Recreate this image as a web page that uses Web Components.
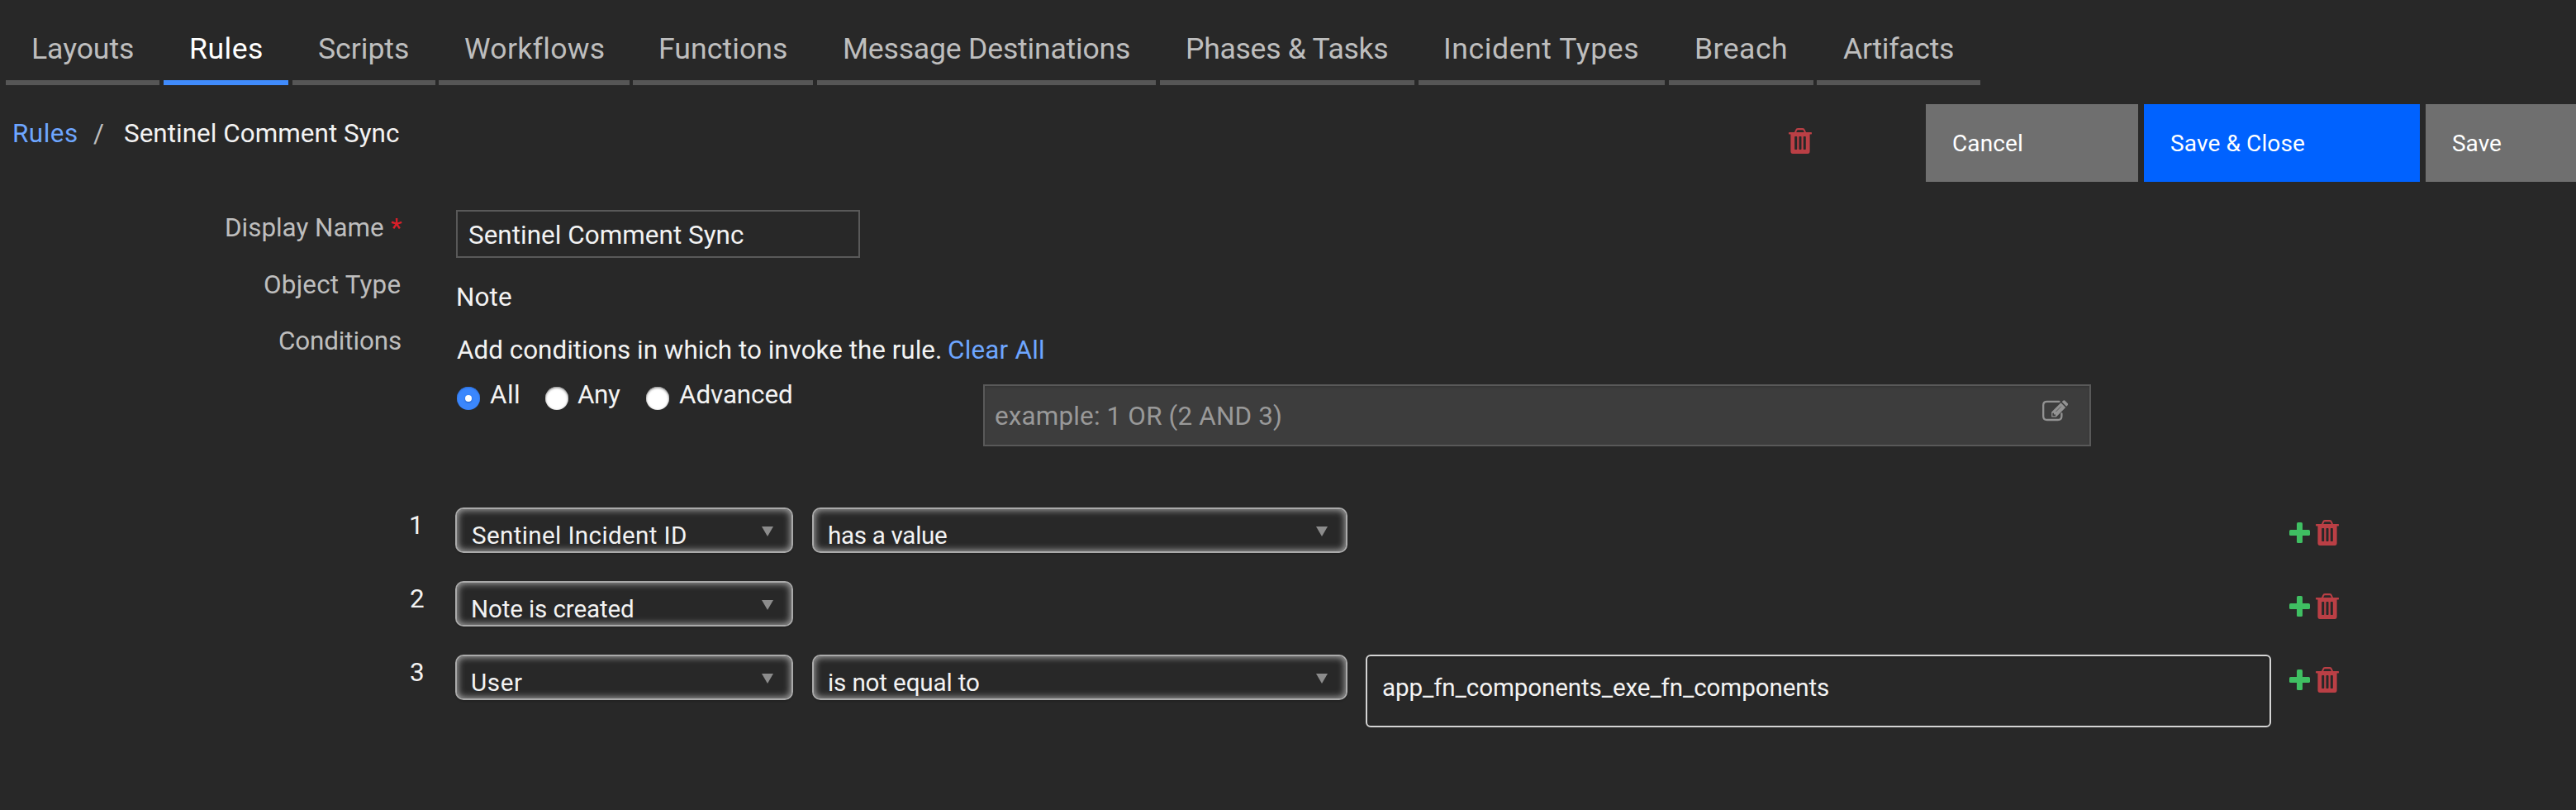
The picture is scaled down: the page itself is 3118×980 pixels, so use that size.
<!DOCTYPE html>
<html lang="en">
<head>
<meta charset="utf-8">
<title>Rules</title>
<style>
html,body{margin:0;background:#282828}
body{width:3118px;height:980px;overflow:hidden;font-family:Roboto,"Liberation Sans",sans-serif;color:#f3f3f3}
</style>
</head>
<body>
<rule-page></rule-page>
<script>
const define = (name, css, html, init) => customElements.define(name, class extends HTMLElement {
  connectedCallback() {
    if (this.shadowRoot) return;
    const root = this.attachShadow({ mode: 'open' });
    root.innerHTML = `<style>:host{display:block;box-sizing:border-box}*{box-sizing:border-box}${css}</style>${typeof html === 'function' ? html(this) : html}`;
    if (init) init(this, root);
  }
});

// One line of text whose glyphs are tracked to fill the width "w" at size "s".
const ctx = document.createElement('canvas').getContext('2d');
define('fit-text', ':host{display:block;flex:none;white-space:nowrap;line-height:40px;height:40px}', '<slot></slot>', el => {
  const text = el.textContent, size = +el.getAttribute('s') || 31.4, w = +el.getAttribute('w');
  el.style.fontSize = size + 'px';
  el.style.width = w + 'px';
  ctx.font = `400 ${size}px Roboto, "Liberation Sans", sans-serif`;
  const m = ctx.measureText(text);
  const ink = m.actualBoundingBoxLeft + m.actualBoundingBoxRight;
  if (text.length > 1) el.style.letterSpacing = ((w - ink) / (text.length - 1)).toFixed(3) + 'px';
  el.style.textIndent = m.actualBoundingBoxLeft.toFixed(2) + 'px';
});

define('nav-tab', `
  :host{flex:none;color:#bebebe}
  .t{height:103px;padding:39px 0 0 33px;border-bottom:6px solid #565656}
  :host([active]){color:#fff}
  :host([active]) .t{border-color:#408bfc}`,
  el => `<div class="t" style="width:${el.getAttribute('box')}px;padding-left:${el.getAttribute('pad') || 33}px"><fit-text s="35.6" w="${el.getAttribute('w')}">${el.textContent.replace('&', '&amp;')}</fit-text></div>`,
  el => { el.style.width = el.getAttribute('pitch') + 'px'; });

define('action-button', `
  :host{height:94px;background:#6f6f6f;color:#fff;padding:28px 0 0 33px;flex:none;overflow:hidden;margin-right:7px}
  :host([primary]){background:#0062ff}`,
  '<slot></slot>');

define('trash-icon', ':host{width:28px;height:31px;flex:none}svg{display:block}', `
  <svg width="28" height="31" viewBox="0 0 28 31"><path fill="#ba3f45" fill-rule="evenodd" d="M7 5 8.3 2Q9 0 11 0h6q2 0 2.7 2L21 5h6.3q.7 0 .7.7v1q0 .8-.7.8H25.600V28q0 3-2.600 3H5q-2.600 0-2.600-3V7.500H.7Q0 7.500 0 6.700v-1Q0 5 .7 5ZM9.200 5h9.600l-.8-2q-.3-.8-1-.8h-6q-.7 0-1 .8ZM7.200 10.700v14.600q0 .7.700.7h1.600q.7 0 .7-.7V10.700q0-.7-.7-.7H7.900q-.7 0-.7.700Zm5.300 0v14.600q0 .7.700.7h1.600q.7 0 .7-.7V10.700q0-.7-.7-.7h-1.600q-.7 0-.7.700Zm5.300 0v14.600q0 .7.700.7h1.600q.7 0 .7-.7V10.700q0-.7-.7-.7h-1.600q-.7 0-.7.700Z"/></svg>`);

define('plus-icon', ':host{width:25px;height:25px;flex:none}svg{display:block}', `
  <svg width="25" height="25" viewBox="0 0 25 25" fill="#3fbf62"><rect x="9" width="7" height="25" rx="1.6"/><rect y="9" width="25" height="7" rx="1.600"/></svg>`);

define('edit-icon', ':host{width:32px;height:27px;flex:none}svg{display:block}', `
  <svg width="32" height="27" viewBox="0 0 32 27"><path d="M20.500 1.800H5.700Q1.200 1.800 1.200 6.300v13.200q0 4.500 4.500 4.500h13.200q4.500 0 4.500-4.500V16.500" fill="none" stroke="#929292" stroke-width="2.300" stroke-linecap="round"/><path d="M11.200 20.500v-6L22.500 3.200l5.700 5.700L16.800 20.500ZM23.700 2.200l1.500-1.500q1.200-.9 2.300 0l3.200 3.200q.9 1.200 0 2.400l-1.500 1.500Z" fill="#929292"/><path d="M13.200 15.800v2.600h2.800" fill="none" stroke="#3d3d3d" stroke-width="1.600"/><path d="m16.500 14 6.300-6.300" stroke="#5a5a5a" stroke-width="1"/></svg>`);

define('radio-dot', `
  :host{width:28px;height:28px;border-radius:50%;background:#fff;flex:none;box-shadow:inset 0 1px 3px #777;display:grid;place-items:center}
  :host([checked]){background:#3b87fd;box-shadow:inset 0 1px 2px #2b6fdc}
  :host([checked])::after{content:"";width:8px;height:8px;border-radius:50%;background:#fff;box-shadow:0 1px 2px #1d5ac0}`, '');

define('select-box', `
  :host{display:flex;height:55px;border:2px solid #aaa;border-radius:10px;flex:none;padding:12px 22px 0 19px;justify-content:space-between;
    box-shadow:inset 0 0 8px 1px #aaa,0 2px 2px rgba(0,0,0,.12)}
  i{width:14px;height:12px;background:#8c8c8c;clip-path:polygon(0 0,100% 0,50% 100%);margin-top:9px}`,
  '<slot></slot><i></i>');

define('condition-row', `
  :host{display:flex;height:89px;padding-left:497px}
  .num{width:54px;padding-top:2px}
  .fields{width:2220px;display:flex;align-items:flex-start}
  .act{display:flex;padding-top:15px}
  plus-icon{margin:3px 7px 0 0}`,
  el => `<div class="num"><fit-text w="15">${el.getAttribute('n')}</fit-text></div><div class="fields"><slot></slot></div><div class="act"><plus-icon></plus-icon><trash-icon></trash-icon></div>`);

define('rule-page', `
  :host{width:3118px;height:980px;overflow:hidden;background:#282828}
  nav{display:flex;padding-left:7px;height:103px}
  header{display:flex;height:151px;align-items:flex-start;padding:23px 0 0 17px;overflow:hidden}
  .crumb{display:flex;flex:none;width:2148px;padding-top:16px}
  .link{color:#6ea6ff}
  header trash-icon{margin:29px 138px 0 0}
  .form{display:grid;grid-template-columns:485px 1fr;column-gap:67px;height:360px}
  .labels{display:flex;flex-direction:column;align-items:flex-end;color:#bebebe}
  .name{display:flex;gap:9px;margin-top:2px}
  .req{color:#da1e28}
  .input{width:489px;height:58px;border:2px solid #595959;padding:9px 0 0 14px}
  .line{display:flex}
  .radios{display:flex;align-items:flex-start}
  .adv{display:flex;justify-content:space-between;width:1341px;height:75px;border:2px solid #595959;background:#3d3d3d;color:#999;padding:17px 25px 0 13px;margin:-3px 0 0 232px;box-shadow:inset 0 2px 3px rgba(0,0,0,.12)}
  .area{width:1096px;height:88px;border:2px solid #d4d4d4;border-radius:6px;padding:18px 0 0 19px;margin-left:22px;box-shadow:inset 0 2px 3px rgba(0,0,0,.15)}
  select-box+select-box{margin-left:23px}
`, `
<nav>
  <nav-tab box="186" pitch="191" w="121">Layouts</nav-tab>
  <nav-tab box="151" pitch="156" w="86">Rules</nav-tab>
  <nav-tab box="173" pitch="177" w="108" pad="32">Scripts</nav-tab>
  <nav-tab box="231" pitch="235" w="167" pad="32">Workflows</nav-tab>
  <nav-tab box="218" pitch="223" w="153">Functions</nav-tab>
  <nav-tab box="410" pitch="415" w="345">Message Destinations</nav-tab>
  <nav-tab box="308" pitch="313" w="243">Phases &amp; Tasks</nav-tab>
  <nav-tab box="298" pitch="303" w="233">Incident Types</nav-tab>
  <nav-tab box="175" pitch="179" w="109">Breach</nav-tab>
  <nav-tab box="198" pitch="198" w="133" pad="32">Artifacts</nav-tab>
</nav>
<header>
  <div class="crumb">
    <fit-text class="link" w="76">Rules</fit-text>
    <fit-text w="10" style="margin:0 28px 0 20px;color:#bebebe">/</fit-text>
    <fit-text w="332">Sentinel Comment Sync</fit-text>
  </div>
  <trash-icon></trash-icon>
  <action-button style="width:257px"><fit-text s="28" w="83">Cancel</fit-text></action-button>
  <action-button primary style="width:334px"><fit-text s="28" w="161">Save &amp; Close</fit-text></action-button>
  <action-button style="width:220px"><fit-text s="28" w="58">Save</fit-text></action-button>
</header>
<div class="form">
  <div class="labels">
    <div class="name"><fit-text w="190">Display Name</fit-text><fit-text class="req" w="12">*</fit-text></div>
    <fit-text w="165" style="margin-top:29px">Object Type</fit-text>
    <fit-text w="147" style="margin-top:28px">Conditions</fit-text>
  </div>
  <div>
    <div class="input"><fit-text w="332">Sentinel Comment Sync</fit-text></div>
    <fit-text w="65" style="margin:28px 0 0 2px">Note</fit-text>
    <div class="line" style="margin:24px 0 0 1px"><fit-text w="585">Add conditions in which to invoke the rule.</fit-text><fit-text class="link" w="115" style="margin-left:10px">Clear All</fit-text></div>
    <div class="radios" style="padding:24px 0 0 1px">
      <radio-dot checked></radio-dot><fit-text w="35" style="margin:-10px 32px 0 12px">All</fit-text>
      <radio-dot></radio-dot><fit-text w="52" style="margin:-10px 31px 0 11px">Any</fit-text>
      <radio-dot></radio-dot><fit-text w="136" style="margin:-10px 0 0 12px">Advanced</fit-text>
      <div class="adv"><fit-text w="345">example: 1 OR (2 AND 3)</fit-text><edit-icon></edit-icon></div>
    </div>
  </div>
</div>
<condition-row n="1">
  <select-box style="width:409px"><fit-text s="29.600" w="258">Sentinel Incident ID</fit-text></select-box>
  <select-box style="width:648px"><fit-text s="29.600" w="142">has a value</fit-text></select-box>
</condition-row>
<condition-row n="2">
  <select-box style="width:409px"><fit-text s="29.600" w="194">Note is created</fit-text></select-box>
</condition-row>
<condition-row n="3">
  <select-box style="width:409px"><fit-text s="29.600" w="60">User</fit-text></select-box>
  <select-box style="width:648px"><fit-text s="29.600" w="181">is not equal to</fit-text></select-box>
  <div class="area"><fit-text s="29.600" w="539">app_fn_components_exe_fn_components</fit-text></div>
</condition-row>`, (el, root) => {
  root.querySelectorAll('nav-tab')[1].setAttribute('active', '');
});
</script>
</body>
</html>
